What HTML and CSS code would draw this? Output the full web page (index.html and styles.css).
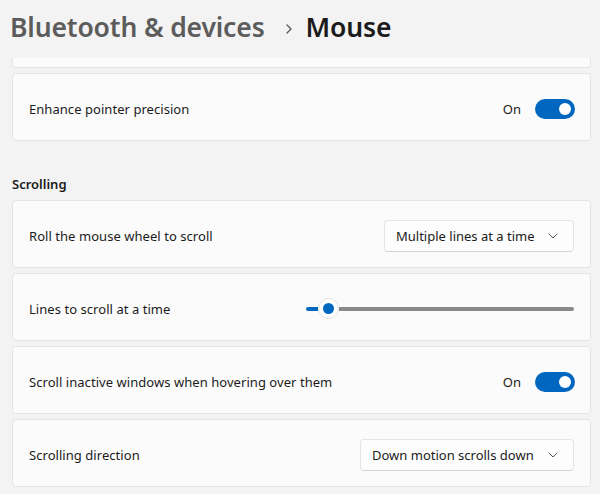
FILE: index.html
```html
<!DOCTYPE html>
<html lang="en">
<head>
<meta charset="utf-8">
<title>Mouse</title>
<link rel="stylesheet" href="styles.css">
</head>
<body>
<div class="page">
  <header class="crumbs">
    <span class="crumb-parent">Bluetooth &amp; devices</span>
    <svg class="crumb-sep" width="10" height="12" viewBox="0 0 10 12"><path d="M3 2 L7 6 L3 10" fill="none" stroke="#5c5c5c" stroke-width="1.4" stroke-linecap="round" stroke-linejoin="round"/></svg>
    <span class="crumb-current">Mouse</span>
  </header>

  <div class="card card-fragment"></div>

  <div class="card">
    <span class="label">Enhance pointer precision</span>
    <div class="toggle-wrap">
      <span class="state">On</span>
      <span class="toggle"><span class="knob"></span></span>
    </div>
  </div>

  <h2 class="section">Scrolling</h2>

  <div class="card">
    <span class="label">Roll the mouse wheel to scroll</span>
    <div class="dropdown dd-lines">
      <span>Multiple lines at a time</span>
      <svg class="chev" width="10" height="6" viewBox="0 0 10 6"><path d="M1 1 L5 5 L9 1" fill="none" stroke="#5c5c5c" stroke-width="1" stroke-linecap="round" stroke-linejoin="round"/></svg>
    </div>
  </div>

  <div class="card">
    <span class="label">Lines to scroll at a time</span>
    <div class="slider">
      <span class="fill"></span>
      <span class="thumb"><span class="thumb-dot"></span></span>
      <span class="rest"></span>
    </div>
  </div>

  <div class="card">
    <span class="label">Scroll inactive windows when hovering over them</span>
    <div class="toggle-wrap">
      <span class="state">On</span>
      <span class="toggle"><span class="knob"></span></span>
    </div>
  </div>

  <div class="card">
    <span class="label">Scrolling direction</span>
    <div class="dropdown dd-dir">
      <span>Down motion scrolls down</span>
      <svg class="chev" width="10" height="6" viewBox="0 0 10 6"><path d="M1 1 L5 5 L9 1" fill="none" stroke="#5c5c5c" stroke-width="1" stroke-linecap="round" stroke-linejoin="round"/></svg>
    </div>
  </div>
</div>
</body>
</html>
```
FILE: styles.css
```css
* { box-sizing: border-box; }
html, body { margin: 0; padding: 0; }
body {
  background: #f3f3f3;
  font-family: "Noto Sans", "Open Sans", sans-serif;
  color: #1b1b1b;
  font-size: 13px;
  width: 600px;
  height: 494px;
  overflow: hidden;
}
.page {
  padding: 0 9px 0 12px;
  display: flex;
  flex-direction: column;
}
.crumbs {
  height: 58px;
  display: flex;
  align-items: center;
  margin-left: -2px;
  padding-bottom: 4px;
  white-space: nowrap;
}
.crumb-parent {
  font-size: 26.5px;
  font-weight: 600;
  color: #5c5c5c;
  letter-spacing: -0.15px;
}
.crumb-sep { margin: 4px 12px 0 19px; }
.crumb-current {
  font-size: 26.5px;
  font-weight: 600;
  color: #1b1b1b;
  letter-spacing: -0.15px;
}
.card {
  background: #fbfbfb;
  border: 1px solid #e5e5e5;
  border-radius: 4px;
  height: 68px;
  margin-bottom: 5px;
  display: flex;
  align-items: center;
  justify-content: space-between;
  padding: 3px 15px 0 16px;
  white-space: nowrap;
}
.card-fragment {
  height: 10px;
  padding: 0;
  border-top: none;
  border-radius: 0 0 4px 4px;
}
.label { font-size: 13px; letter-spacing: 0.05px; }
.section {
  margin: 28px 0 6px 0;
  height: 20px;
  line-height: 21px;
  font-size: 13px;
  font-weight: 600;
}
.toggle-wrap { display: flex; align-items: center; }
.state { margin-right: 14px; }
.toggle {
  width: 40px;
  height: 20px;
  border-radius: 10px;
  background: #0067c0;
  display: flex;
  align-items: center;
  justify-content: flex-end;
  padding-right: 4px;
}
.knob {
  width: 12px;
  height: 12px;
  border-radius: 50%;
  background: #fff;
}
.dropdown {
  height: 32px;
  background: #fdfdfd;
  border: 1px solid #e5e5e5;
  border-bottom-color: #d4d4d4;
  border-radius: 4px;
  display: flex;
  align-items: center;
  justify-content: space-between;
  padding: 0 15px 0 11px;
  margin-right: 1px;
}
.dd-lines { width: 190px; }
.dd-dir { width: 214px; }
.chev { margin-left: 8px; }
.slider {
  width: 268px;
  height: 20px;
  display: flex;
  align-items: center;
  margin-right: 1px;
}
.fill {
  width: 12px;
  height: 4px;
  background: #0067c0;
  border-radius: 2px 0 0 2px;
}
.thumb {
  width: 21px;
  height: 21px;
  border-radius: 50%;
  background: #fff;
  border: 1px solid #e3e3e3;
  display: flex;
  align-items: center;
  justify-content: center;
}
.thumb-dot {
  width: 11px;
  height: 11px;
  border-radius: 50%;
  background: #0067c0;
}
.rest {
  flex: 1;
  height: 4px;
  background: #8a8a8a;
  border-radius: 0 2px 2px 0;
}
```
